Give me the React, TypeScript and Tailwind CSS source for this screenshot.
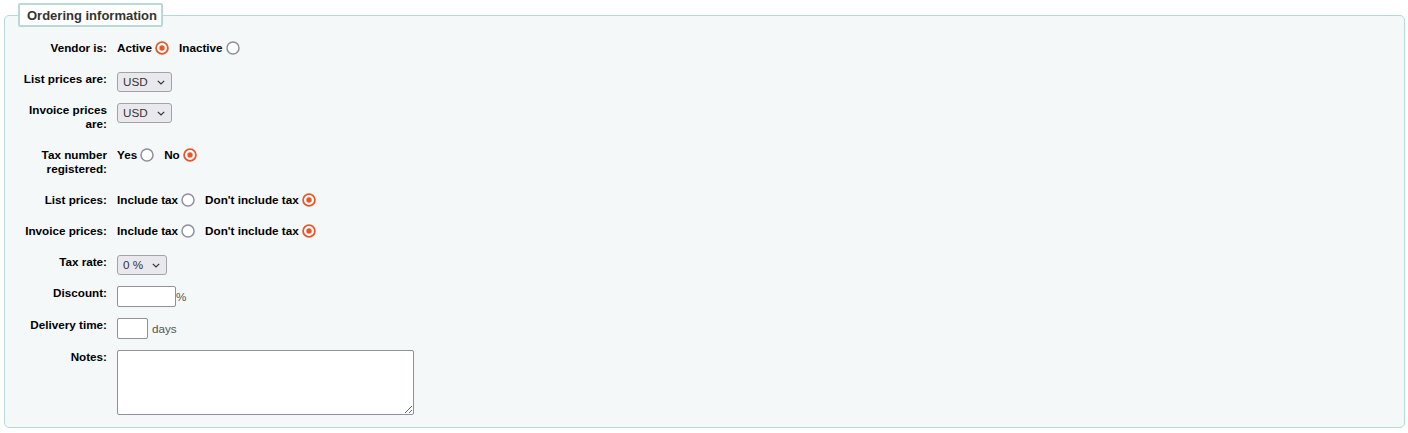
import React from "react";

const FONT = "font-['Liberation_Sans',Arial,sans-serif]";

function Radio(props: { checked?: boolean }) {
  return (
    <svg width="14" height="14" viewBox="0 0 14 14" className="ml-[3px] shrink-0">
      {props.checked ? (
        <>
          <circle cx="7" cy="7" r="5.9" fill="white" stroke="#e8562a" strokeWidth="1.8" />
          <circle cx="7" cy="7" r="2.7" fill="#e8562a" />
        </>
      ) : (
        <circle cx="7" cy="7" r="6" fill="white" stroke="#8f8f9d" strokeWidth="1.5" />
      )}
    </svg>
  );
}

function Choice(props: { text: string; checked?: boolean }) {
  return (
    <span className="flex items-center mr-[10px] font-bold">
      {props.text}
      <Radio checked={props.checked} />
    </span>
  );
}

function FakeSelect(props: { value: string; width: string }) {
  return (
    <div
      className={`flex items-center justify-between h-[20px] ${props.width} pl-[5px] pr-[6px] rounded-[3px] border border-[#a2a2aa] bg-[#e9e9ed] text-[#333]`}
    >
      <span>{props.value}</span>
      <svg width="8" height="5" viewBox="0 0 8 5">
        <path d="M0.8 0.8 L4 4 L7.2 0.8" fill="none" stroke="#333" strokeWidth="1.2" />
      </svg>
    </div>
  );
}

function Row(props: { label: string; children?: React.ReactNode }) {
  return (
    <div className="flex mb-[11px]">
      <div className="w-[94px] mr-[10px] text-right font-bold leading-[14px] pb-[6px]">{props.label}</div>
      <div className="flex items-start leading-[14px]">{props.children}</div>
    </div>
  );
}

export default function App() {
  return (
    <div className={`${FONT} text-[11.7px] text-black bg-white w-[1408px] h-[433px] pt-[3px] pl-[4px] pr-[3px]`}>
      <div className="relative z-10 ml-[14px] mb-[-12px] w-[145px] h-[24px] border-2 border-[#b9d8d9] rounded-[2px] bg-white pl-[7px] text-[13px] font-bold text-[#333] leading-[21px]">
        Ordering information
      </div>
      <div className="border border-[#b9d8d9] rounded-[5px] bg-[#f4f8f9] pt-[25px] pb-[1px] pl-[8px]">
        <Row label="Vendor is:">
          <Choice text="Active" checked />
          <Choice text="Inactive" />
        </Row>
        <Row label="List prices are:">
          <FakeSelect value="USD" width="w-[55px]" />
        </Row>
        <Row label="Invoice prices are:">
          <FakeSelect value="USD" width="w-[55px]" />
        </Row>
        <Row label="Tax number registered:">
          <Choice text="Yes" />
          <Choice text="No" checked />
        </Row>
        <Row label="List prices:">
          <Choice text="Include tax" />
          <Choice text="Don't include tax" checked />
        </Row>
        <Row label="Invoice prices:">
          <Choice text="Include tax" />
          <Choice text="Don't include tax" checked />
        </Row>
        <Row label="Tax rate:">
          <FakeSelect value="0 %" width="w-[50px]" />
        </Row>
        <Row label="Discount:">
          <div className="flex items-center">
            <input className="w-[59px] h-[21px] bg-white border border-[#8f8f9d] rounded-[2px] outline-none" />
            <span className="text-[#555]">%</span>
          </div>
        </Row>
        <Row label="Delivery time:">
          <div className="flex items-center">
            <input className="w-[31px] h-[21px] bg-white border border-[#8f8f9d] rounded-[2px] outline-none" />
            <span className="ml-[4px] text-[#555]">days</span>
          </div>
        </Row>
        <Row label="Notes:">
          <textarea className="w-[297px] h-[65px] bg-white border border-[#8f8f9d] rounded-[2px] outline-none block" />
        </Row>
      </div>
    </div>
  );
}
